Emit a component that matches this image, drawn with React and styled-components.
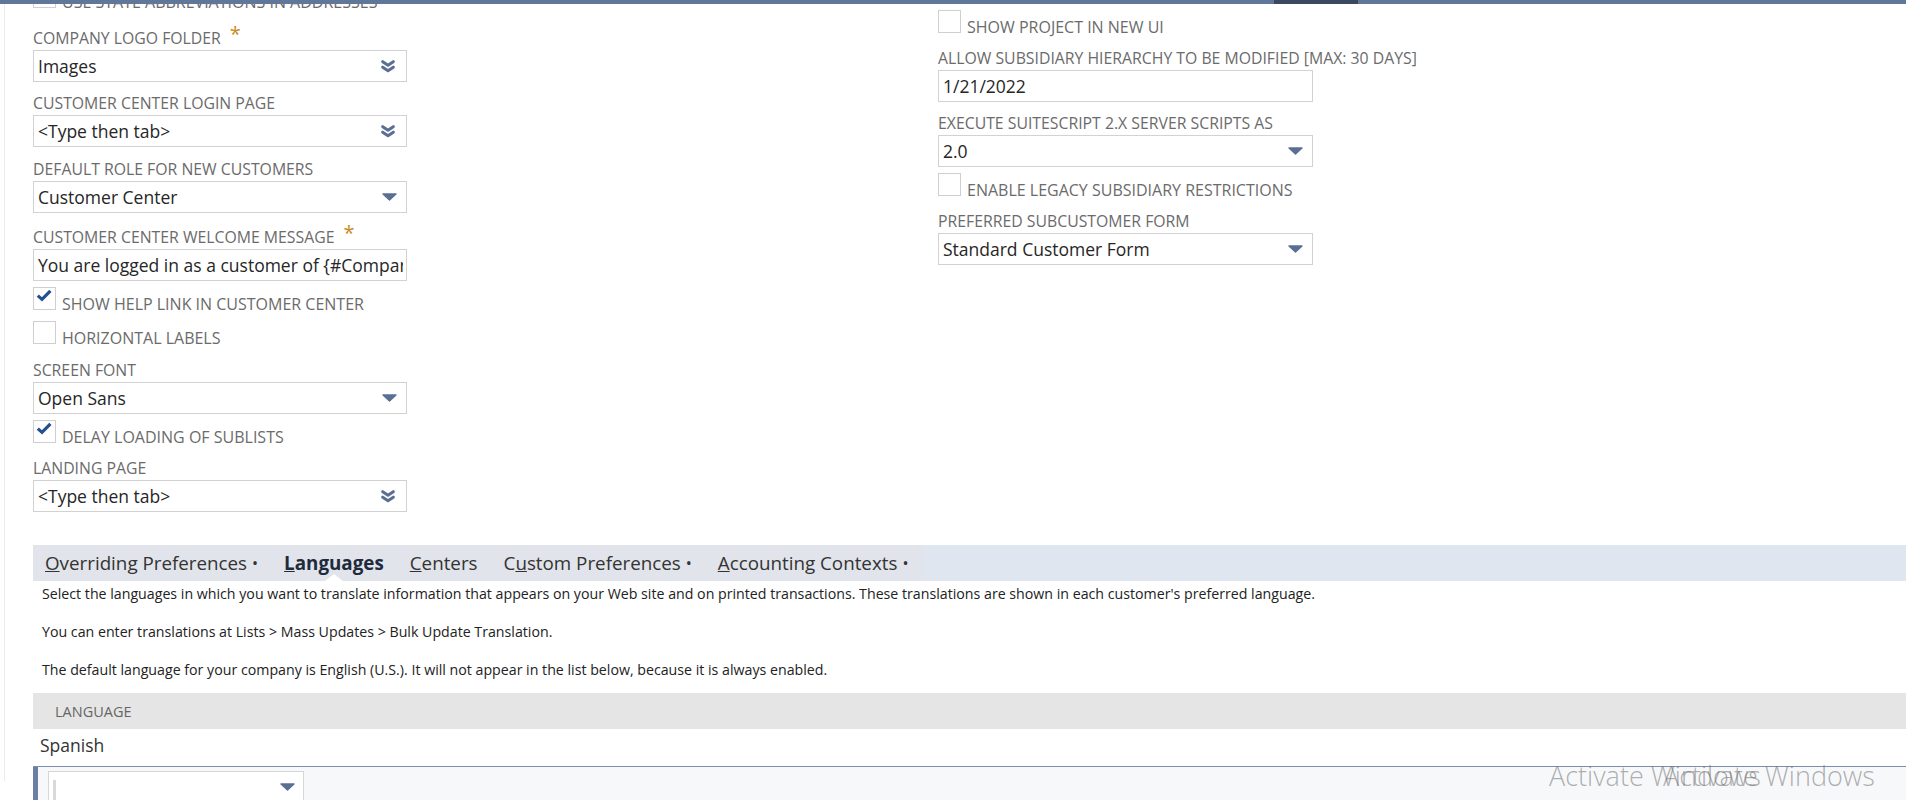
import React from 'react'
import styled, { createGlobalStyle } from 'styled-components'

const GlobalStyle = createGlobalStyle`
  html, body {
    margin:0;
    padding:0;
    background:#fff;
  }
  body {
    font-family:"Open Sans", "Noto Sans", sans-serif;
  }
`

const Page = styled.div`
  position:relative;
  width:1906px;
  height:800px;
  overflow:hidden;
  background:#fff;
`

const TopBar = styled.div`
  position:relative;
  z-index:2;
  display:flex;
  height:4px;
  background:#607799;
`

const TopBarSpacer = styled.div`
  width:1274px;
`

const TopBarActive = styled.div`
  width:84px;
  background:#3b4960;
`

const Body = styled.div`
  margin-left:4px;
  border-left:1px solid #ececec;
  padding-left:28px;
  height:796px;
`

const FormGrid = styled.div`
  display:grid;
  grid-template-columns:374px 375px;
  column-gap:531px;
  align-items:start;
  margin-top:-19px;
`

const Column = styled.div`
  display:flex;
  flex-direction:column;
`

const Field = styled.div`
  margin-top:${p => p.$top}px;
`

const Label = styled.div`
  height:20px;
  line-height:20px;
  font-size:15.8px;
  color:#6b6b6b;
  text-transform:uppercase;
  white-space:nowrap;
`

const Asterisk = styled.span`
  position:relative;
  top:-3px;
  margin-left:9px;
  font-size:20px;
  line-height:0;
  color:#c98a1b;
`

const InputBox = styled.div`
  margin-top:2px;
  height:32px;
  box-sizing:border-box;
  border:1px solid #d2d2d2;
  background:#fff;
  display:flex;
  align-items:center;
  padding:0 ${p => p.$right}px 0 4px;
  font-size:17.5px;
  color:#262626;
`

const Value = styled.span`
  flex:1;
  white-space:nowrap;
  overflow:hidden;
`

const CheckRow = styled.div`
  display:flex;
  align-items:flex-end;
  height:23px;
  margin-top:${p => p.$top}px;
`

const Box = styled.span`
  position:relative;
  flex:none;
  width:23px;
  height:23px;
  box-sizing:border-box;
  border:1px solid #cfcfcf;
  background:#fff;
`

const CheckMark = styled.svg`
  position:absolute;
  left:2px;
  top:1px;
`

const CheckText = styled.span`
  margin-left:6px;
  margin-bottom:-2px;
  font-size:16px;
  line-height:16px;
  color:#6b6b6b;
  text-transform:uppercase;
  white-space:nowrap;
`

const Panel = styled.div`
  margin-top:33px;
`

const TabBar = styled.div`
  display:flex;
  height:36px;
  background:#dfe6f0;
`

const TabStrip = styled.div`
  display:flex;
  padding:0 1px 0 0;
  background:#e1e4ea;
`

const Tab = styled.div`
  position:relative;
  display:flex;
  align-items:center;
  padding:0 13px;
  font-size:18.8px;
  font-weight:${p => (p.$active ? 700 : 400)};
  color:${p => (p.$active ? '#1f2a3d' : '#333')};
  white-space:nowrap;

  &:first-child {
    padding-left:12px;
  }
`

const Dot = styled.span`
  margin-left:5px;
  font-size:16px;
`

const Pointer = styled.span`
  position:absolute;
  bottom:0;
  left:50%;
  margin-left:-9px;
  border-left:9px solid transparent;
  border-right:9px solid transparent;
  border-bottom:7px solid #fff;
`

const Help = styled.div`
  padding:3px 0 0 9px;
  font-size:14.2px;
  color:#222;
`

const HelpLine = styled.p`
  margin:0 0 18px;
  line-height:20px;
  white-space:nowrap;

  &:last-child {
    margin-bottom:13px;
  }
`

const HeaderRow = styled.div`
  display:flex;
  align-items:center;
  height:36px;
  padding-left:22px;
  background:#e5e5e5;
  font-size:14.5px;
  color:#666;
  text-transform:uppercase;
`

const DataRow = styled.div`
  display:flex;
  align-items:center;
  height:38px;
  box-sizing:border-box;
  padding:0 0 5px 7px;
  font-size:17.5px;
  color:#333;
  border-bottom:1px solid #7b8eae;
`

const EditRow = styled.div`
  display:flex;
  height:40px;
  padding:4px 0 0 10px;
  background:#f7f8fa;
  border-left:5px solid #6a7fa3;
`

const EditSelect = styled.div`
  display:flex;
  align-items:center;
  width:256px;
  height:32px;
  box-sizing:border-box;
  padding:0 8px 0 4px;
  border:1px solid #d6d6d6;
  background:#fff;
`

const Caret = styled.span`
  align-self:flex-end;
  width:3px;
  height:22px;
  background:#d9d9d9;
`

const Spacer = styled.span`
  flex:1;
`

const Watermark = styled.div`
  position:absolute;
  top:759px;
  left:${p => p.$left}px;
  font-size:27px;
  font-weight:300;
  line-height:34px;
  color:rgba(110, 110, 110, 0.55);
  white-space:nowrap;
  pointer-events:none;
`

const DoubleChevron = () => (
  <svg width="14" height="13" viewBox="0 0 14 13">
    <path
      d="M1.7 1.7 L7 5.3 L12.3 1.7 M1.7 7.2 L7 10.8 L12.3 7.2"
      fill="none"
      stroke="#5b6f93"
      strokeWidth="3"
      strokeLinecap="round"
      strokeLinejoin="round"
    />
  </svg>
)

const Triangle = () => (
  <svg width="15" height="8" viewBox="0 0 15 8">
    <path d="M1 1 H14 L7.5 7 Z" fill="#5b6f93" stroke="#5b6f93" strokeWidth="1.4" strokeLinejoin="round" />
  </svg>
)

function Select({ label, value, required, double, top }) {
  return (
    <Field $top={top}>
      <Label>
        {label}
        {required && <Asterisk>*</Asterisk>}
      </Label>
      <InputBox $right={double ? 11 : 9}>
        <Value>{value}</Value>
        {double ? <DoubleChevron /> : <Triangle />}
      </InputBox>
    </Field>
  )
}

function TextField({ label, value, required, top }) {
  return (
    <Field $top={top}>
      <Label>
        {label}
        {required && <Asterisk>*</Asterisk>}
      </Label>
      <InputBox $right={3}>
        <Value>{value}</Value>
      </InputBox>
    </Field>
  )
}

function Checkbox({ label, checked, top }) {
  return (
    <CheckRow $top={top}>
      <Box>
        {checked && (
          <CheckMark width="16" height="13" viewBox="0 0 16 13">
            <path d="M1.8 6.6 L6 10.4 L14.4 1.8" fill="none" stroke="#23508f" strokeWidth="3.2" />
          </CheckMark>
        )}
      </Box>
      <CheckText>{label}</CheckText>
    </CheckRow>
  )
}

const tabs = [
  { first: 'O', rest: 'verriding Preferences', dot: true },
  { first: 'L', rest: 'anguages', active: true },
  { first: 'C', rest: 'enters' },
  { pre: 'C', first: 'u', rest: 'stom Preferences', dot: true },
  { first: 'A', rest: 'ccounting Contexts', dot: true },
]

export default function App() {
  return (
    <Page>
      <GlobalStyle />
      <TopBar>
        <TopBarSpacer />
        <TopBarActive />
      </TopBar>
      <Body>
        <FormGrid>
          <Column>
            <Checkbox label="Use state abbreviations in addresses" top={0} />
            <Select label="Company logo folder" value="Images" required double top={20} />
            <Select label="Customer center login page" value="<Type then tab>" double top={11} />
            <Select label="Default role for new customers" value="Customer Center" top={12} />
            <TextField
              label="Customer center welcome message"
              value="You are logged in as a customer of {#CompanyName#}"
              required
              top={14}
            />
            <Checkbox label="Show help link in customer center" checked top={6} />
            <Checkbox label="Horizontal labels" top={11} />
            <Select label="Screen font" value="Open Sans" top={16} />
            <Checkbox label="Delay loading of sublists" checked top={6} />
            <Select label="Landing page" value="<Type then tab>" double top={15} />
          </Column>
          <Column>
            <Checkbox label="Show project in new UI" top={25} />
            <TextField label="Allow subsidiary hierarchy to be modified [max: 30 days]" value="1/21/2022" top={15} />
            <Select label="Execute SuiteScript 2.x server scripts as" value="2.0" top={11} />
            <Checkbox label="Enable legacy subsidiary restrictions" top={6} />
            <Select label="Preferred subcustomer form" value="Standard Customer Form" top={15} />
          </Column>
        </FormGrid>

        <Panel>
          <TabBar>
            <TabStrip>
              {tabs.map(t => (
                <Tab key={t.rest} $active={t.active}>
                  <span>
                    {t.pre}
                    <u>{t.first}</u>
                    {t.rest}
                  </span>
                  {t.dot && <Dot>•</Dot>}
                  {t.active && <Pointer />}
                </Tab>
              ))}
            </TabStrip>
          </TabBar>
          <Help>
            <HelpLine>
              Select the languages in which you want to translate information that appears on your Web site and on printed transactions. These translations are shown in each customer's preferred language.
            </HelpLine>
            <HelpLine>You can enter translations at Lists &gt; Mass Updates &gt; Bulk Update Translation.</HelpLine>
            <HelpLine>
              The default language for your company is English (U.S.). It will not appear in the list below, because it is always enabled.
            </HelpLine>
          </Help>
          <HeaderRow>Language</HeaderRow>
          <DataRow>Spanish</DataRow>
          <EditRow>
            <EditSelect>
              <Caret />
              <Spacer />
              <Triangle />
            </EditSelect>
          </EditRow>
        </Panel>
      </Body>
      <Watermark $left={1549}>Activate Windows</Watermark>
      <Watermark $left={1663}>Activate Windows</Watermark>
    </Page>
  )
}
